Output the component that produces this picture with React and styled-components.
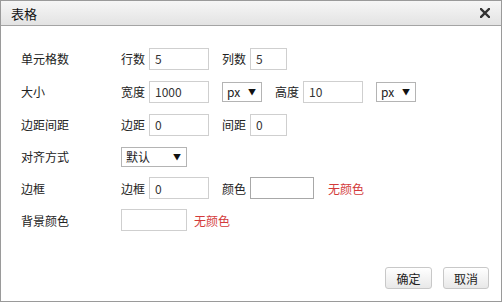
import React from "react";
import styled, { createGlobalStyle } from "styled-components";

const Global = createGlobalStyle`
  html, body { margin: 0; padding: 0; background: #fff; }
  body { font-family: "Noto Sans CJK SC", "Liberation Sans", sans-serif; font-size: 12px; color: #222; }
  * { box-sizing: border-box; }
`;

const Dialog = styled.div`
  width: 502px;
  height: 302px;
  border: 1px solid #9a9a9a;
  display: flex;
  flex-direction: column;
  background: #fff;
`;

const TitleBar = styled.div`
  height: 25px;
  flex: none;
  display: flex;
  align-items: center;
  justify-content: space-between;
  padding: 0 10px 0 10px;
  background: linear-gradient(#f6f6f6, #e3e3e3);
  border-bottom: 1px solid #a4a4a4;
  font-size: 13px;
  color: #111;
`;

const Close = styled.button`
  width: 12px;
  height: 12px;
  padding: 0;
  border: 0;
  background: none;
  display: flex;
  align-items: center;
  justify-content: center;
`;

const Body = styled.div`
  flex: 1;
  padding: 16px 0 0 20px;
  display: flex;
  flex-direction: column;
`;

const Row = styled.div`
  display: flex;
  align-items: center;
  height: ${(p) => p.$h || 32}px;
`;

const Label = styled.div`
  width: 100px;
  flex: none;
`;

const Field = styled.span`
  margin-right: 4px;
`;

const Group = styled.div`
  display: flex;
  align-items: center;
  margin-right: ${(p) => p.$mr ?? 13}px;
`;

const Input = styled.input`
  width: ${(p) => p.$w || 60}px;
  height: 22px;
  border: 1px solid ${(p) => (p.$dark ? "#a8a8a8" : "#cfcfcf")};
  padding: 0 5px;
  font-family: inherit;
  font-size: 12px;
  color: #333;
  outline: none;
  background: #fff;
`;

const Select = styled.div`
  width: ${(p) => p.$w || 40}px;
  height: 20px;
  border: 1px solid #b4b4b4;
  display: flex;
  align-items: center;
  justify-content: space-between;
  padding: 0 5px 0 4px;
  font-size: 12px;
  color: #222;
  background: #fff;
`;

const Arrow = styled.span`
  font-size: 8px;
  color: #111;
`;

const NoColor = styled.span`
  color: #d33a3a;
  margin-left: ${(p) => p.$ml || 14}px;
`;

const Footer = styled.div`
  display: flex;
  justify-content: flex-end;
  gap: 11px;
  padding: 0 12px 12px 0;
`;

const Button = styled.button`
  width: ${(p) => p.$w || 47}px;
  height: 22px;
  border: 1px solid #c8c8c8;
  border-radius: 3px;
  background: linear-gradient(#ffffff, #e8e8e8);
  font-family: inherit;
  font-size: 12px;
  color: #222;
  padding: 0;
`;

function Sel({ w, children }) {
  return (
    <Select $w={w}>
      <span>{children}</span>
      <Arrow>▼</Arrow>
    </Select>
  );
}

export default function App() {
  return (
    <>
      <Global />
      <Dialog>
        <TitleBar>
          <span>表格</span>
          <Close aria-label="close">
            <svg width="10" height="10" viewBox="0 0 10 10">
              <path d="M1 1L9 9M9 1L1 9" stroke="#333" strokeWidth="2.4" strokeLinecap="square" />
            </svg>
          </Close>
        </TitleBar>
        <Body>
          <Row $h={33}>
            <Label>单元格数</Label>
            <Group><Field>行数</Field><Input defaultValue="5" /></Group>
            <Group><Field>列数</Field><Input $w={37} defaultValue="5" /></Group>
          </Row>
          <Row $h={33}>
            <Label>大小</Label>
            <Group><Field>宽度</Field><Input defaultValue="1000" /></Group>
            <Group><Sel>px</Sel></Group>
            <Group><Field>高度</Field><Input defaultValue="10" /></Group>
            <Group $mr={0}><Sel>px</Sel></Group>
          </Row>
          <Row $h={33}>
            <Label>边距间距</Label>
            <Group><Field>边距</Field><Input defaultValue="0" /></Group>
            <Group><Field>间距</Field><Input $w={37} defaultValue="0" /></Group>
          </Row>
          <Row $h={31}>
            <Label>对齐方式</Label>
            <Group $mr={0}><Sel w={66}>默认</Sel></Group>
          </Row>
          <Row $h={32}>
            <Label>边框</Label>
            <Group><Field>边框</Field><Input defaultValue="0" /></Group>
            <Group $mr={0}><Field>颜色</Field><Input $w={64} $dark defaultValue="" /></Group>
            <NoColor>无颜色</NoColor>
          </Row>
          <Row $h={32}>
            <Label>背景颜色</Label>
            <Input $w={66} defaultValue="" />
            <NoColor $ml={7}>无颜色</NoColor>
          </Row>
        </Body>
        <Footer>
          <Button>确定</Button>
          <Button $w={46}>取消</Button>
        </Footer>
      </Dialog>
    </>
  );
}
